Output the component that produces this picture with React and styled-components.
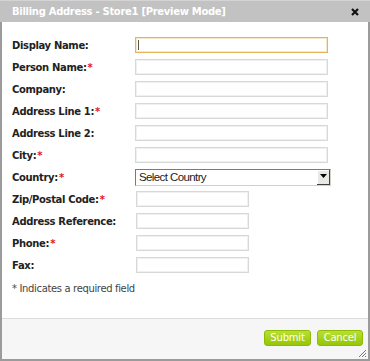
import React from "react";
import styled, { createGlobalStyle, css } from "styled-components";

const Global = createGlobalStyle`
  html, body {
    margin: 0;
    padding: 0;
    background: #ffffff;
  }
  * {
    box-sizing: border-box;
  }
`;

const Dialog = styled.div`
  position: relative;
  width: 370px;
  height: 361px;
  display: flex;
  flex-direction: column;
  border: 2px solid #9b9b9b;
  border-top: none;
  font-family: "DejaVu Sans", Verdana, sans-serif;
  background: #ffffff;
`;

const TitleBar = styled.div`
  height: 22px;
  margin: 0 -2px;
  padding: 0 12px 0 12px;
  display: flex;
  align-items: center;
  justify-content: space-between;
  background: #c2c2c2;
  border-top: 1px solid #d4d4d4;
  color: #ffffff;
  font-size: 10px;
  font-weight: bold;
  letter-spacing: -0.3px;
`;

const Close = styled.svg`
  width: 8px;
  height: 8px;
  margin-right: -1px;
`;

const Body = styled.div`
  flex: 1;
  padding: 12px 10px 0 10px;
`;

const Row = styled.div`
  display: grid;
  grid-template-columns: 123px 1fr;
  align-items: center;
  height: 22px;
`;

const Label = styled.label`
  font-size: 10px;
  font-weight: bold;
  color: #222222;
  letter-spacing: -0.35px;
`;

const Star = styled.span`
  color: #e8141c;
  margin-left: 1px;
`;

const Field = styled.div`
  position: relative;
  height: 16px;
  margin-left: ${(p) => (p.short ? "1px" : "0")};
  width: ${(p) => (p.short ? "113px" : "193px")};
  border: 1px solid #d8d8d8;
  box-shadow: inset 0 0 0 1px #f0f0f0;
  background: #ffffff;
  ${(p) =>
    p.focused &&
    css`
      border-color: #e6b45a;
      box-shadow: inset 0 0 0 1px #f8e7c6;
    `}
`;

const Caret = styled.span`
  position: absolute;
  left: 2px;
  top: 2px;
  width: 1px;
  height: 10px;
  background: #555555;
`;

const Select = styled.div`
  display: flex;
  align-items: center;
  justify-content: space-between;
  width: 196px;
  height: 17px;
  border-top: 1px solid #7a7a7a;
  border-left: 1px solid #7a7a7a;
  border-right: 1px solid #d4d0c8;
  border-bottom: 1px solid #d4d0c8;
  padding-left: 3px;
  font-family: "Liberation Sans", Arial, sans-serif;
  font-size: 11.5px;
  letter-spacing: -0.6px;
  color: #222222;
`;

const Arrow = styled.div`
  width: 13px;
  height: 15px;
  background: #e8e8e4;
  border-right: 1px solid #404040;
  border-bottom: 1px solid #404040;
  box-shadow: inset 1px 1px 0 #ffffff;
  display: flex;
  align-items: center;
  justify-content: center;
`;

const Note = styled.div`
  margin-top: 7px;
  font-size: 10px;
  color: #444444;
  letter-spacing: -0.35px;
`;

const Footer = styled.div`
  height: 41px;
  border-top: 1px solid #dcdcdc;
  background: #f6f6f6;
  display: flex;
  justify-content: flex-end;
  align-items: flex-start;
  gap: 6px;
  padding: 11px 5px 0 0;
`;

const Button = styled.button`
  height: 16px;
  width: ${(p) => p.w}px;
  padding: 0;
  border: 1px solid #8dbb08;
  border-radius: 3px;
  background: linear-gradient(#b8df34, #95c604);
  color: #ffffff;
  font-family: "DejaVu Sans", Verdana, sans-serif;
  font-size: 10px;
  letter-spacing: -0.2px;
  line-height: 14px;
`;

const Grip = styled.svg`
  position: absolute;
  right: 1px;
  bottom: 1px;
  width: 10px;
  height: 10px;
`;

const fields = [
  { label: "Display Name:", focused: true },
  { label: "Person Name:", req: true },
  { label: "Company:" },
  { label: "Address Line 1:", req: true },
  { label: "Address Line 2:" },
  { label: "City:", req: true },
  { label: "Country:", req: true, select: true },
  { label: "Zip/Postal Code:", req: true, short: true },
  { label: "Address Reference:", short: true },
  { label: "Phone:", req: true, short: true },
  { label: "Fax:", short: true },
];

export default function App() {
  return (
    <>
      <Global />
      <Dialog>
        <TitleBar>
          <span>Billing Address - Store1 [Preview Mode]</span>
          <Close viewBox="0 0 8 8">
            <path d="M1 1 L7 7 M7 1 L1 7" stroke="#111" strokeWidth="2.2" />
          </Close>
        </TitleBar>
        <Body>
          {fields.map((f) => (
            <Row key={f.label}>
              <Label>
                {f.label}
                {f.req && <Star>*</Star>}
              </Label>
              {f.select ? (
                <Select>
                  <span>Select Country</span>
                  <Arrow>
                    <svg width="7" height="5" viewBox="0 0 7 5">
                      <path d="M0 0 H7 L3.5 4 Z" fill="#000" />
                    </svg>
                  </Arrow>
                </Select>
              ) : (
                <Field short={f.short} focused={f.focused}>
                  {f.focused && <Caret />}
                </Field>
              )}
            </Row>
          ))}
          <Note>* Indicates a required field</Note>
        </Body>
        <Footer>
          <Button w={47}>Submit</Button>
          <Button w={46}>Cancel</Button>
        </Footer>
        <Grip viewBox="0 0 10 10">
          <path d="M9 2 L2 9 M9 5 L5 9 M9 8 L8 9" stroke="#777" strokeWidth="1" />
        </Grip>
      </Dialog>
    </>
  );
}
